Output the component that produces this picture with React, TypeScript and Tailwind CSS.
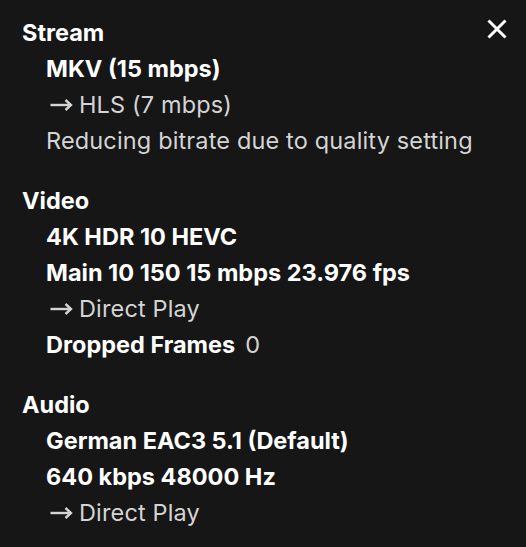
type Line = { text: string; kind: "bold" | "arrow" | "plain" | "kv"; value?: string };

const sections: { title: string; lines: Line[] }[] = [
  {
    title: "Stream",
    lines: [
      { text: "MKV (15 mbps)", kind: "bold" },
      { text: "HLS (7 mbps)", kind: "arrow" },
      { text: "Reducing bitrate due to quality setting", kind: "plain" },
    ],
  },
  {
    title: "Video",
    lines: [
      { text: "4K HDR 10 HEVC", kind: "bold" },
      { text: "Main 10 150 15 mbps 23.976 fps", kind: "bold" },
      { text: "Direct Play", kind: "arrow" },
      { text: "Dropped Frames", kind: "kv", value: "0" },
    ],
  },
  {
    title: "Audio",
    lines: [
      { text: "German EAC3 5.1 (Default)", kind: "bold" },
      { text: "640 kbps 48000 Hz", kind: "bold" },
      { text: "Direct Play", kind: "arrow" },
    ],
  },
];

function Arrow() {
  return (
    <svg width="23" height="12" viewBox="0 0 23 12" fill="none" stroke="currentColor" strokeWidth="2.4" className="shrink-0">
      <path d="M0.5 6H21" />
      <path d="M15.5 1L21 6L15.5 11" strokeLinejoin="miter" />
    </svg>
  );
}

function Row({ line }: { line: Line }) {
  if (line.kind === "bold") return <div className="font-bold text-white">{line.text}</div>;
  if (line.kind === "arrow")
    return (
      <div className="flex items-center gap-[6px] text-[#d4d4d4] tracking-[0.15px] pl-1">
        <Arrow />
        <span>{line.text}</span>
      </div>
    );
  if (line.kind === "kv")
    return (
      <div>
        <span className="font-bold text-white">{line.text}</span>
        <span className="text-[#d4d4d4] ml-[10px]">{line.value}</span>
      </div>
    );
  return <div className="text-[#d4d4d4] tracking-[0.15px]">{line.text}</div>;
}

export default function App() {
  return (
    <div
      className="relative w-[526px] h-[547px] bg-[#161616] text-white px-[22px] pt-[15px] text-[23.5px] leading-[36px]"
      style={{ fontFamily: "Inter, 'Noto Sans', sans-serif" }}
    >
      <button className="absolute top-[19px] left-[487px] text-white">
        <svg width="20" height="20" viewBox="0 0 20 20" stroke="currentColor" strokeWidth="3" fill="none">
          <path d="M1.5 1.5L18.5 18.5M18.5 1.5L1.5 18.5" />
        </svg>
      </button>
      <div className="flex flex-col gap-6">
        {sections.map((s) => (
          <div key={s.title}>
            <div className="font-bold text-white">{s.title}</div>
            <div className="pl-6">
              {s.lines.map((l, i) => (
                <Row key={i} line={l} />
              ))}
            </div>
          </div>
        ))}
      </div>
    </div>
  );
}
